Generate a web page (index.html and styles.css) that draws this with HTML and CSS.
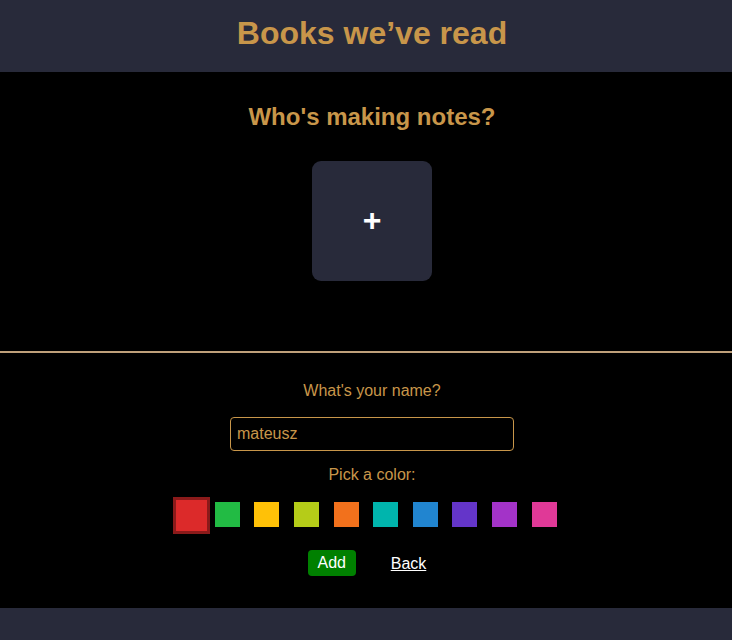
FILE: index.html
```html
<!DOCTYPE html>
<html lang="en">
<head>
<meta charset="utf-8">
<title>Books we’ve read</title>
<link rel="stylesheet" href="styles.css">
</head>
<body>
<header class="topbar">
  <h1 class="site-title">Books we’ve read</h1>
</header>
<main class="content">
  <section class="profiles">
    <h2 class="profiles-title">Who's making notes?</h2>
    <button class="profile-add" type="button">+</button>
  </section>
  <hr class="divider">
  <form class="new-profile">
    <label class="field-label" for="name">What's your name?</label>
    <input class="name-input" id="name" type="text" value="mateusz">
    <p class="field-label pick-label">Pick a color:</p>
    <div class="swatches">
      <span class="swatch swatch-selected" style="background:#dc2a2a"></span>
      <span class="swatch" style="background:#22bb44"></span>
      <span class="swatch" style="background:#ffc107"></span>
      <span class="swatch" style="background:#b5cc18"></span>
      <span class="swatch" style="background:#f2711c"></span>
      <span class="swatch" style="background:#00b5ad"></span>
      <span class="swatch" style="background:#2185d0"></span>
      <span class="swatch" style="background:#6435c9"></span>
      <span class="swatch" style="background:#a333c8"></span>
      <span class="swatch" style="background:#e03997"></span>
    </div>
    <div class="actions">
      <button class="btn-add" type="button">Add</button>
      <a class="link-back" href="#">Back</a>
    </div>
  </form>
</main>
<footer class="bottombar"></footer>
</body>
</html>
```
FILE: styles.css
```css
* { box-sizing: border-box; }
html, body {
  margin: 0;
  padding: 0;
  background: #000;
  font-family: "Liberation Sans", Arial, sans-serif;
  color: #c8964a;
}
.topbar {
  height: 72px;
  background: #282a3a;
  display: flex;
  align-items: center;
  justify-content: center;
  padding-left: 12px;
  padding-bottom: 6px;
}
.site-title {
  margin: 0;
  font-size: 32px;
  line-height: 36px;
  font-weight: bold;
  color: #c8964a;
}
.content {
  height: 536px;
  display: flex;
  flex-direction: column;
}
.profiles {
  display: flex;
  flex-direction: column;
  align-items: center;
  padding-left: 12px;
  padding-top: 31px;
}
.profiles-title {
  margin: 0;
  font-size: 24px;
  line-height: 28px;
  font-weight: bold;
  color: #c8964a;
}
.profile-add {
  margin-top: 30px;
  width: 120px;
  height: 120px;
  border: none;
  border-radius: 9px;
  background: #282a3a;
  color: #fff;
  font-family: "Liberation Sans", Arial, sans-serif;
  font-weight: bold;
  font-size: 32px;
  line-height: 1;
  padding: 0 0 2px 0;
  cursor: pointer;
}
.divider {
  margin: 70px 0 0 0;
  border: none;
  height: 2px;
  background: #bfa07a;
}
.new-profile {
  display: flex;
  flex-direction: column;
  align-items: center;
  padding-left: 12px;
  padding-top: 29px;
}
.field-label {
  margin: 0;
  font-size: 16px;
  line-height: 18px;
  color: #c8964a;
}
.name-input {
  margin-top: 17px;
  width: 284px;
  height: 34px;
  background: #000;
  border: 1px solid #c8964a;
  border-radius: 4px;
  padding: 0 6px;
  color: #c8964a;
  font-family: "Liberation Sans", Arial, sans-serif;
  font-size: 16px;
  outline: none;
}
.pick-label {
  margin-top: 15px;
}
.swatches {
  margin-top: 13px;
  height: 37px;
  display: flex;
  align-items: center;
}
.swatch {
  display: block;
  width: 25px;
  height: 25px;
  margin-right: 14.6px;
  margin-top: -2px;
}
.swatch-selected {
  width: 37px;
  height: 37px;
  border: 3px solid #8b1a1a;
  margin-right: 5px;
  margin-top: 0;
}
.actions {
  margin-top: 16px;
  margin-right: 10px;
  display: flex;
  align-items: center;
  gap: 35px;
}
.btn-add {
  width: 48px;
  height: 26px;
  border: none;
  border-radius: 4px;
  background: #008000;
  color: #fff;
  font-family: "Liberation Sans", Arial, sans-serif;
  font-size: 16px;
  padding: 0;
  cursor: pointer;
}
.link-back {
  color: #fff;
  font-size: 16px;
  line-height: 18px;
  padding-top: 2px;
  text-decoration: underline;
}
.bottombar {
  height: 32px;
  background: #282a3a;
}
```
